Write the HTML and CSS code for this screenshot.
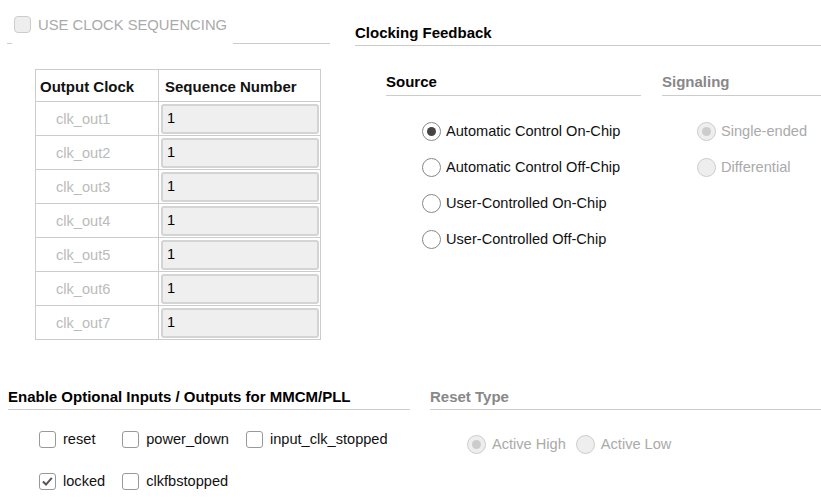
FILE: index.html
```html
<!DOCTYPE html>
<html>
<head>
<meta charset="utf-8">
<link rel="stylesheet" href="styles.css">
</head>
<body>
<div class="top">
  <div class="left">
    <div class="seq-head">
      <span class="seg seg-short"></span>
      <div class="seq-label">
        <span class="cb cb-disabled"></span>
        <span class="seq-text">USE CLOCK SEQUENCING</span>
      </div>
      <span class="seg seg-long"></span>
    </div>
    <table class="seq-table">
      <thead>
        <tr><th class="c1">Output Clock</th><th class="c2">Sequence Number</th></tr>
      </thead>
      <tbody>
        <tr><td class="name">clk_out1</td><td class="val"><div class="field">1</div></td></tr>
        <tr><td class="name">clk_out2</td><td class="val"><div class="field">1</div></td></tr>
        <tr><td class="name">clk_out3</td><td class="val"><div class="field">1</div></td></tr>
        <tr><td class="name">clk_out4</td><td class="val"><div class="field">1</div></td></tr>
        <tr><td class="name">clk_out5</td><td class="val"><div class="field">1</div></td></tr>
        <tr><td class="name">clk_out6</td><td class="val"><div class="field">1</div></td></tr>
        <tr><td class="name">clk_out7</td><td class="val"><div class="field">1</div></td></tr>
      </tbody>
    </table>
  </div>
  <div class="right">
    <div class="heading main-heading">Clocking Feedback</div>
    <div class="fb-cols">
      <div class="source">
        <div class="heading sub-heading">Source</div>
        <div class="radio-list">
          <div class="opt"><span class="rd rd-on"></span><span>Automatic Control On-Chip</span></div>
          <div class="opt"><span class="rd"></span><span>Automatic Control Off-Chip</span></div>
          <div class="opt"><span class="rd"></span><span>User-Controlled On-Chip</span></div>
          <div class="opt"><span class="rd"></span><span>User-Controlled Off-Chip</span></div>
        </div>
      </div>
      <div class="signaling">
        <div class="heading sub-heading muted-head">Signaling</div>
        <div class="radio-list sig-list">
          <div class="opt disabled"><span class="rd rd-dis rd-on"></span><span>Single-ended</span></div>
          <div class="opt disabled"><span class="rd rd-dis"></span><span>Differential</span></div>
        </div>
      </div>
    </div>
  </div>
</div>
<div class="bottom">
  <div class="opt-io">
    <div class="heading">Enable Optional Inputs / Outputs for MMCM/PLL</div>
    <div class="cb-grid">
      <div class="opt"><span class="cb"></span><span>reset</span></div>
      <div class="opt"><span class="cb"></span><span>power_down</span></div>
      <div class="opt"><span class="cb"></span><span>input_clk_stopped</span></div>
      <div class="opt"><span class="cb cb-on"><svg viewBox="0 0 17 17" width="15" height="15"><path d="M3.3 8.6 L6.8 12 L13.4 4.4" fill="none" stroke="#555" stroke-width="2.3"/></svg></span><span>locked</span></div>
      <div class="opt"><span class="cb"></span><span>clkfbstopped</span></div>
    </div>
  </div>
  <div class="reset-type">
    <div class="heading muted-head">Reset Type</div>
    <div class="rt-row">
      <div class="opt disabled"><span class="rd rd-dis rd-on"></span><span>Active High</span></div>
      <div class="opt disabled"><span class="rd rd-dis"></span><span>Active Low</span></div>
    </div>
  </div>
</div>
</body>
</html>
```
FILE: styles.css
```css
* { box-sizing: border-box; }
body {
  margin: 0;
  font-family: "Liberation Sans", Arial, sans-serif;
  font-size: 14.6px;
  color: #111;
  background: #fff;
}
.top { display: flex; }
.left { width: 330px; padding-left: 7px; }
.right { flex: 1; margin-left: 25px; }

.seq-head { display: flex; height: 44px; }
.seg { height: 44px; border-bottom: 1px solid #ccc; }
.seg-short { width: 5px; }
.seg-long { flex: 1; }
.seq-label {
  width: 221px;
  padding-left: 2px;
  margin-top: 16px;
  height: 17px;
  display: flex;
  align-items: center;
  gap: 7px;
}
.seq-text { color: #aaa; font-size: 14.8px; }

.cb {
  width: 17px; height: 17px;
  border: 1px solid #999;
  border-radius: 3px;
  background: #fff;
  display: inline-flex;
  align-items: center;
  justify-content: center;
  flex: none;
}
.cb-disabled { background: #eee; border-color: #ccc; border-radius: 4px; }

.seq-table {
  margin-top: 25px;
  margin-left: 28px;
  border-collapse: collapse;
  width: 286px;
}
.seq-table th, .seq-table td { border: 1px solid #ccc; padding: 0; }
.seq-table th {
  height: 32px;
  text-align: left;
  font-weight: bold;
  font-size: 15px;
  padding-left: 4px;
  padding-top: 1px;
}
.seq-table th.c1 { width: 123px; }
.seq-table th.c2 { padding-left: 6px; }
.seq-table td { height: 34px; }
.seq-table td.name { color: #bbb; padding-left: 20px; }
.seq-table td.val { padding: 1px 1px 1px 2px; }
.field {
  height: 30px;
  background: #efefef;
  border: 2px solid #d4d4d4;
  border-radius: 3px;
  padding-left: 4px;
  padding-bottom: 1px;
  display: flex;
  align-items: center;
  color: #000;
}

.heading {
  font-weight: bold;
  font-size: 15px;
  line-height: 18px;
  border-bottom: 1px solid #ccc;
  color: #000;
}
.main-heading { margin-top: 24px; padding-bottom: 3px; }
.muted-head { color: #888; }

.fb-cols { display: flex; margin-left: 31px; margin-top: 27px; gap: 21px; }
.source { width: 255px; }
.signaling { flex: 1; }
.sub-heading { padding-bottom: 4px; }

.radio-list { margin-top: 17px; margin-left: 36px; }
.sig-list { margin-left: 35px; }
.radio-list .opt { height: 36px; }

.opt { display: flex; align-items: center; gap: 6px; white-space: nowrap; }
.radio-list .opt { gap: 5px; }
.opt.disabled { color: #aaa; }

.rd {
  width: 19px; height: 19px;
  border: 1.5px solid #888;
  border-radius: 50%;
  background: #fff;
  position: relative;
  flex: none;
}
.rd-on::after {
  content: "";
  position: absolute;
  left: 50%; top: 50%;
  width: 9px; height: 9px;
  margin: -4.5px 0 0 -4.5px;
  border-radius: 50%;
  background: #444;
}
.rd-dis { background: #eee; border-color: #ccc; }
.rd-dis.rd-on::after { background: #ccc; }

.bottom { display: flex; margin-top: 48px; }
.opt-io { width: 402px; margin-left: 8px; }
.opt-io .heading { padding-bottom: 3px; }
.cb-grid {
  display: grid;
  grid-template-columns: auto auto auto;
  justify-content: start;
  column-gap: 17px;
  row-gap: 18px;
  margin-top: 17px;
  margin-left: 31px;
}
.cb-grid .opt { height: 24px; gap: 7px; }

.reset-type { flex: 1; margin-left: 20px; }
.reset-type .heading { padding-bottom: 3px; }
.rt-row { display: flex; gap: 10px; margin-top: 22px; margin-left: 37px; }
.rt-row .opt { height: 24px; gap: 6px; }
```
